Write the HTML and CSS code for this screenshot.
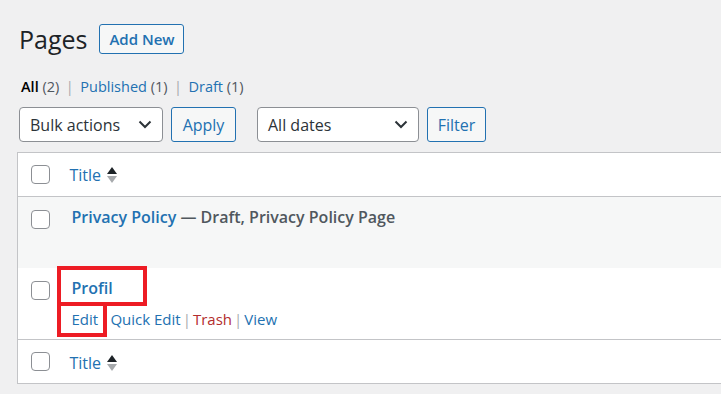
FILE: index.html
```html
<!DOCTYPE html>
<html lang="en">
<head>
    <meta charset="UTF-8">
    <title>Pages</title>
    <link rel="stylesheet" href="styles.css">
</head>
<body>
    <div class="wrap">
        <div class="page-head">
            <h1>Pages</h1>
            <a class="button add-new" href="#">Add New</a>
        </div>

        <!-- status filters -->
        <ul class="subsubsub">
            <li class="current">All <span class="count">(2)</span></li>
            <li class="sep">|</li>
            <li><a href="#">Published <span class="count">(1)</span></a></li>
            <li class="sep">|</li>
            <li><a href="#">Draft <span class="count">(1)</span></a></li>
        </ul>

        <div class="tablenav">
            <div class="select bulk">
                <span>Bulk actions</span>
                <svg width="14" height="9" viewBox="0 0 14 9"><path d="M1.5 1.5 7 7l5.5-5.5" fill="none" stroke="#2c3338" stroke-width="2"/></svg>
            </div>
            <a class="button apply" href="#">Apply</a>
            <div class="select dates">
                <span>All dates</span>
                <svg width="14" height="9" viewBox="0 0 14 9"><path d="M1.5 1.5 7 7l5.5-5.5" fill="none" stroke="#2c3338" stroke-width="2"/></svg>
            </div>
            <a class="button filter" href="#">Filter</a>
        </div>

        <table class="list-table">
            <thead>
                <tr>
                    <td class="check"><span class="checkbox"></span></td>
                    <th class="title-col"><a href="#">Title</a><span class="sort"><i class="up"></i><i class="down"></i></span></th>
                </tr>
            </thead>
            <tbody>
                <tr class="alt">
                    <td class="check"><span class="checkbox"></span></td>
                    <td class="title"><strong><a href="#">Privacy Policy</a> — Draft, Privacy Policy Page</strong></td>
                </tr>
                <tr class="profil">
                    <td class="check"><span class="checkbox"></span></td>
                    <td class="title">
                        <strong><a href="#">Profil</a></strong>
                        <div class="row-actions">
                            <a href="#">Edit</a><span class="bar">|</span><a href="#">Quick Edit</a><span class="bar">|</span><a class="trash" href="#">Trash</a><span class="bar">|</span><a href="#">View</a>
                        </div>
                        <span class="mark mark-title"></span>
                        <span class="mark mark-edit"></span>
                    </td>
                </tr>
            </tbody>
            <tfoot>
                <tr>
                    <td class="check"><span class="checkbox"></span></td>
                    <th class="title-col"><a href="#">Title</a><span class="sort"><i class="up"></i><i class="down"></i></span></th>
                </tr>
            </tfoot>
        </table>
    </div>
</body>
</html>
```

FILE: styles.css
```css
* {
    box-sizing: border-box;
    margin: 0;
    padding: 0;
}
html, body {
    overflow: hidden;
}
body {
    background: #f0f0f1;
    color: #3c434a;
    font-family: "Open Sans", "Noto Sans", sans-serif;
    font-size: 15px;
}
a {
    color: #2271b1;
    text-decoration: none;
}
.wrap {
    padding: 24px 0 0 19px;
    width: 760px;
}
.page-head {
    display: flex;
    align-items: center;
    gap: 12px;
    height: 30px;
}
h1 {
    font-size: 25px;
    font-weight: 400;
    color: #1d2327;
    line-height: 30px;
}
.button {
    display: inline-flex;
    align-items: center;
    justify-content: center;
    border: 1px solid #2271b1;
    border-radius: 3px;
    background: #f6f7f7;
    color: #2271b1;
}
.add-new {
    width: 85px;
    height: 30px;
    font-size: 15px;
    font-weight: 600;
}
.subsubsub {
    display: flex;
    list-style: none;
    gap: 6.5px;
    margin: 24px 0 0 2px;
    font-size: 14.5px;
    line-height: 18px;
}
.subsubsub .current {
    color: #000;
    font-weight: 600;
}
.count {
    color: #50575e;
    font-weight: 400;
}
.sep {
    color: #a7aaad;
}
.tablenav {
    display: flex;
    margin-top: 11px;
    height: 35px;
    font-size: 16px;
}
.select {
    display: flex;
    align-items: center;
    justify-content: space-between;
    padding: 0 10px 0 10px;
    background: #fff;
    border: 1px solid #8c8f94;
    border-radius: 4px;
    color: #2c3338;
}
.bulk {
    width: 144px;
}
.apply {
    width: 65px;
    margin-left: 8px;
}
.dates {
    width: 162px;
    margin-left: 21px;
}
.filter {
    width: 59px;
    margin-left: 8px;
}
.list-table {
    margin: 10px 0 0 -2px;
    width: 760px;
    border-collapse: collapse;
    border: 1px solid #c3c4c7;
    background: #fff;
}
.list-table td, .list-table th {
    vertical-align: top;
    text-align: left;
    font-weight: 400;
}
.check {
    width: 52px;
    padding-left: 13px;
}
thead tr {
    border-bottom: 1px solid #c3c4c7;
    height: 44px;
}
tfoot tr {
    border-top: 1px solid #c3c4c7;
    height: 44px;
}
thead .check, tfoot .check {
    padding-top: 12px;
}
.checkbox {
    display: block;
    width: 19px;
    height: 19px;
    border: 1px solid #8c8f94;
    border-radius: 4px;
    background: #fff;
}
.title-col {
    padding-top: 9px;
    font-size: 16px;
}
tfoot .title-col {
    padding-top: 10px;
}
.title-col a {
    vertical-align: middle;
}
.sort {
    display: inline-flex;
    flex-direction: column;
    gap: 2px;
    vertical-align: middle;
    margin-left: 6px;
}
.sort i {
    width: 0;
    height: 0;
    border-left: 5px solid transparent;
    border-right: 5px solid transparent;
}
.sort .up {
    border-bottom: 7px solid #1d2327;
}
.sort .down {
    border-top: 7px solid #a7aaad;
}
tbody tr {
    height: 71px;
}
tbody .check {
    padding-top: 13px;
}
tr.alt {
    background: #f6f7f7;
}
tr.profil {
    height: 72px;
}
.title {
    position: relative;
    padding: 9px 0 0 2px;
    font-size: 16px;
}
.title strong {
    font-weight: 600;
    color: #50575e;
}
.row-actions {
    display: flex;
    margin-top: 10px;
    font-size: 15px;
    color: #a7aaad;
}
.row-actions .bar {
    margin: 0 2px;
}
.row-actions .trash {
    color: #b32d2e;
}
.mark {
    position: absolute;
    border: 4px solid #ed1c24;
}
.mark-title {
    left: -13px;
    top: -2px;
    width: 90px;
    height: 40px;
}
.mark-edit {
    left: -13px;
    top: 34px;
    width: 50px;
    height: 35px;
}
```
